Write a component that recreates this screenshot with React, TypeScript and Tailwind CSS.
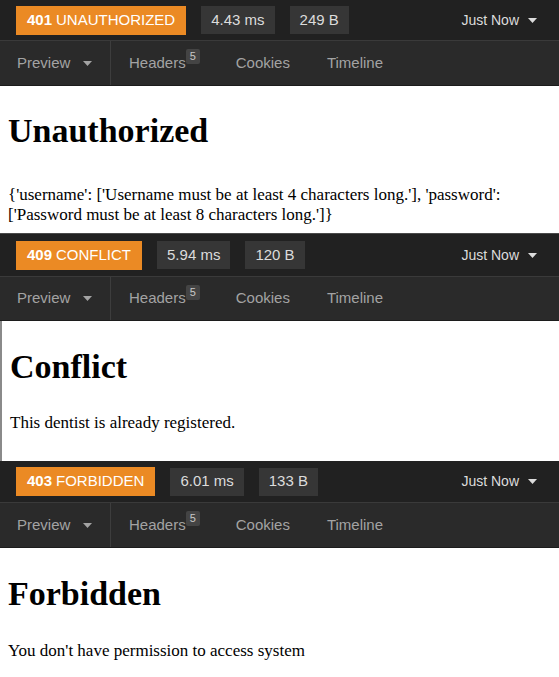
import React from "react"

type PanelProps = {
  code: string
  label: string
  time: string
  size: string
  title: string
  body: string
  topH: string
  tabH: string
  contentH: string
  h1Mt: string
  pMt: string
  leftBorder?: boolean
  topBorder?: boolean
}

function Caret({ className = "" }: { className?: string }) {
  return (
    <svg className={className} width="9" height="5" viewBox="0 0 9 5">
      <path d="M0 0h9L4.5 5z" fill="currentColor" />
    </svg>
  )
}

function Panel(p: PanelProps) {
  return (
    <section className={p.topBorder ? "border-t border-[#4a4a4a]" : ""}>
      {/* status bar */}
      <div className={`flex items-center ${p.topH} bg-[#212121] border-b border-[#3a3a3a] pl-[16px] pr-[22px]`}>
        <span className="flex items-center h-[29px] px-[11px] bg-[#eb8a24] text-white text-[15px]">
          <span className="font-bold">{p.code}</span>
          <span className="ml-[4px]">{p.label}</span>
        </span>
        <span className="flex items-center h-[28px] ml-[15px] px-[10px] bg-[#363636] text-[#dcdcdc] text-[15px]">{p.time}</span>
        <span className="flex items-center h-[28px] ml-[15px] px-[10px] bg-[#363636] text-[#dcdcdc] text-[15px]">{p.size}</span>
        <span className="ml-auto flex items-center gap-[9px] text-[#dcdcdc] text-[14px]">
          Just Now
          <Caret />
        </span>
      </div>

      {/* tabs */}
      <div className={`flex ${p.tabH} bg-[#2a2a2a] border-b border-[#1c1c1c] text-[15px] text-[#a3a3a3]`}>
        <div className="flex items-center w-[111px] pl-[17px] gap-[13px] border-r border-[#3d3d3d]">
          Preview
          <Caret />
        </div>
        <div className="flex items-center px-[18px]">
          Headers
          <span className="self-start mt-[8px] flex items-center justify-center w-[14px] h-[15px] rounded-[2px] bg-[#444444] text-[#c8c8c8] text-[11px]">5</span>
        </div>
        <div className="flex items-center px-[18px]">Cookies</div>
        <div className="flex items-center px-[19px]">Timeline</div>
      </div>

      {/* response preview */}
      <div className={`${p.contentH} bg-white px-[8px] overflow-hidden font-['Liberation_Serif',serif] text-black ${p.leftBorder ? "border-l-2 border-[#8a8a8a]" : ""}`}>
        <h1 className={`${p.h1Mt} text-[34px] leading-[40px] font-bold`}>{p.title}</h1>
        <p className={`${p.pMt} text-[17px] leading-[20px]`}>{p.body}</p>
      </div>
    </section>
  )
}

export default function App() {
  return (
    <div className="w-[559px] h-[677px] overflow-hidden bg-white font-['Liberation_Sans',Arial,sans-serif]">
      <Panel
        code="401"
        label="UNAUTHORIZED"
        time="4.43 ms"
        size="249 B"
        title="Unauthorized"
        body="{'username': ['Username must be at least 4 characters long.'], 'password': ['Password must be at least 8 characters long.']}"
        topH="h-[41px]"
        tabH="h-[45px]"
        contentH="h-[147px]"
        h1Mt="pt-[25px]"
        pMt="mt-[34px]"
      />
      <Panel
        code="409"
        label="CONFLICT"
        time="5.94 ms"
        size="120 B"
        title="Conflict"
        body="This dentist is already registered."
        topH="h-[43px]"
        tabH="h-[44px]"
        contentH="h-[140px]"
        h1Mt="pt-[26px]"
        pMt="mt-[26px]"
        leftBorder
        topBorder
      />
      <Panel
        code="403"
        label="FORBIDDEN"
        time="6.01 ms"
        size="133 B"
        title="Forbidden"
        body="You don't have permission to access system"
        topH="h-[42px]"
        tabH="h-[45px]"
        contentH="h-[130px]"
        h1Mt="pt-[26px]"
        pMt="mt-[27px]"
      />
    </div>
  )
}
